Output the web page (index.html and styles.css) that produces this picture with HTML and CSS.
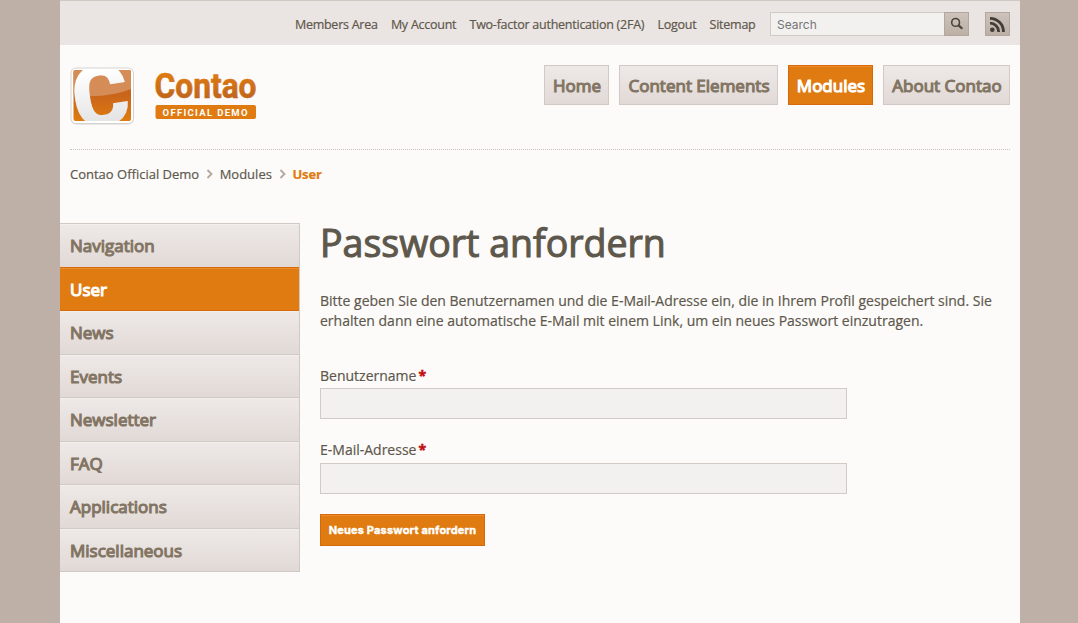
FILE: index.html
```html
<!DOCTYPE html>
<html lang="de">
<head>
<meta charset="utf-8">
<title>Passwort anfordern - Contao Official Demo</title>
<link rel="stylesheet" href="styles.css">
</head>
<body>
<div class="page">
  <div class="topbar">
    <nav class="meta-nav"><a>Members Area</a><a>My Account</a><a>Two-factor authentication (2FA)</a><a>Logout</a><a>Sitemap</a></nav>
    <form class="search">
      <input class="search-input" type="text" placeholder="Search">
      <button class="icon-button search-button" type="button" aria-label="Search">
        <svg width="14" height="14" viewBox="0 0 14 14" fill="none" stroke="#4b443c"><circle cx="5.6" cy="5.4" r="3.900" stroke-width="1.600"/><path d="M8.3 8.1l4 3.700" stroke-width="2.2"/></svg>
      </button>
    </form>
    <a class="icon-button rss-button" aria-label="RSS">
      <svg width="17" height="17" viewBox="0 0 17 17" fill="none" stroke="#433d37"><circle cx="3.300" cy="13.700" r="2.3" fill="#433d37" stroke="none"/><path d="M1 7.2a8.7 8.7 0 0 1 8.7 8.7M1 2.4a13.5 13.5 0 0 1 13.5 13.5" stroke-width="2.8"/></svg>
    </a>
  </div>
  <header class="header">
    <svg class="logo" width="190" height="62" viewBox="0 0 190 62" role="img" aria-label="Contao Official Demo">
      <defs>
        <linearGradient id="mark" x2="0" y2="1"><stop stop-color="#c9651a"/><stop offset=".5" stop-color="#c9651a"/><stop offset="1" stop-color="#df7b10"/></linearGradient>
        <linearGradient id="letter" gradientUnits="userSpaceOnUse" x1="0" y1="-56" x2="0" y2="0"><stop stop-color="#fff"/><stop offset="1" stop-color="#e2e2e2"/></linearGradient>
        <linearGradient id="word" gradientUnits="userSpaceOnUse" x1="0" y1="6" x2="0" y2="34"><stop stop-color="#e07c10"/><stop offset="1" stop-color="#bd641d"/></linearGradient>
        <clipPath id="tile"><rect x="3.500" y="4" width="57.500" height="51" rx="2"/></clipPath>
      </defs>
      <rect x="0.5" y="1.5" width="63.500" height="57" rx="6" fill="#d5d3d1"/>
      <rect x="1.5" y="2.5" width="61.500" height="54.500" rx="4.5" fill="#fff"/>
      <rect x="3.500" y="4" width="57.500" height="51" rx="2" fill="url(#mark)"/>
      <g clip-path="url(#tile)">
        <path d="M3 4h58v19Q36 33 3 29z" fill="#d58c56"/>
        <text class="logo-mark" transform="translate(7 64) rotate(-9)" x="0" y="0" font-size="86" textLength="57" lengthAdjust="spacingAndGlyphs">C</text>
      </g>
      <text class="logo-word" x="84.500" y="31.500" textLength="102" lengthAdjust="spacingAndGlyphs">Contao</text>
      <rect x="85.5" y="39" width="100.500" height="14" rx="2" fill="#df7b10"/>
      <text class="logo-tag" x="92.500" y="49.500" textLength="85">OFFICIAL DEMO</text>
    </svg>
    <nav class="main-nav"><a class="n-home">Home</a><a class="n-content">Content Elements</a><a class="n-modules active">Modules</a><a class="n-about">About Contao</a></nav>
  </header>
  <div class="breadcrumb">
    <a>Contao Official Demo</a>
    <svg width="8" height="10" viewBox="0 0 8 10"><path d="M1.500 1l4 4-4 4" fill="none" stroke="#b2a79c" stroke-width="1.800"/></svg>
    <a>Modules</a>
    <svg width="8" height="10" viewBox="0 0 8 10"><path d="M1.500 1l4 4-4 4" fill="none" stroke="#b2a79c" stroke-width="1.800"/></svg>
    <strong>User</strong>
  </div>
  <div class="columns">
    <nav class="side-nav"><a>Navigation</a><a class="active">User</a><a>News</a><a>Events</a><a>Newsletter</a><a>FAQ</a><a>Applications</a><a>Miscellaneous</a></nav>
    <main class="content">
      <h1>Passwort anfordern</h1>
      <p>Bitte geben Sie den Benutzernamen und die E-Mail-Adresse ein, die in Ihrem Profil gespeichert sind. Sie erhalten dann eine automatische E-Mail mit einem Link, um ein neues Passwort einzutragen.</p>
      <form class="form">
        <label for="username">Benutzername<span class="mandatory">*</span></label>
        <input id="username" type="text">
        <label class="email-label" for="email">E-Mail-Adresse<span class="mandatory">*</span></label>
        <input class="email-input" id="email" type="text">
        <button type="button">Neues Passwort anfordern</button>
      </form>
    </main>
  </div>
</div>
</body>
</html>
```
FILE: styles.css
```css
* { box-sizing: border-box; }
body {
  margin: 0;
  background: #beb0a7;
  color: #5e584c;
  font: 14px/20px "Open Sans", sans-serif;
  overflow: hidden;
}
.page { width: 960px; height: 623px; margin: 0 auto 0 60px; background: #fcfbfa; }
.topbar {
  height: 45px;
  display: flex;
  justify-content: flex-end;
  align-items: flex-start;
  padding: 11px 10px 0;
  background: #eae4e2;
  border-top: 1px solid #d1c8c1;
}
.meta-nav { display: flex; gap: 13.200px; margin-right: 14.500px; padding-top: 3px; font-size: 12.500px; letter-spacing: -0.250px; -webkit-text-stroke: 0.200px; }
.search { display: flex; margin-right: 16px; }
.search-input {
  width: 174px;
  height: 24px;
  padding: 1px 6px;
  border: 1px solid #d1cac5;
  border-right: 0;
  border-radius: 0;
  background: #f3f1f0;
  font: 12px Inter, sans-serif;
}
.search-input::placeholder { color: #757575; opacity: 1; }
.icon-button {
  width: 25px;
  height: 24px;
  padding: 0;
  display: flex;
  align-items: center;
  justify-content: center;
  border: 1px solid #b3a69b;
  background: linear-gradient(#cdc3bc, #bcb0a6);
}
.header {
  height: 105px;
  margin: 0 10px;
  display: flex;
  justify-content: space-between;
  align-items: flex-start;
  padding-top: 20px;
  border-bottom: 1px dotted #c9c3bd;
}
.logo { margin-top: 1px; overflow: visible; }
.logo-mark { font-family: Roboto, sans-serif; font-weight: 900; fill: url(#letter); }
.logo-word { font: 700 35px Roboto, sans-serif; fill: url(#word); stroke: url(#word); stroke-width: 0.600px; }
.logo-tag { font: 700 9.500px Roboto, sans-serif; fill: #fff; }
.main-nav { display: flex; gap: 10px; }
.main-nav a {
  height: 40px;
  padding-left: 1px;
  text-align: center;
  border: 1px solid #d1c9c4;
  background: linear-gradient(#eee9e7, #e1d9d6);
  color: #837564;
  -webkit-text-stroke: 1.100px;
  font-size: 17px;
  line-height: 40px;
}
.main-nav .n-home { width: 65px; }
.main-nav .n-content { width: 159px; }
.main-nav .n-modules { width: 85px; }
.main-nav .n-about { width: 127px; }
.main-nav .active {
  border-color: #d66a0a;
  background: #df7b10;
  box-shadow: inset 0 1px #ee8c2c;
  color: #fff;
}
.breadcrumb { height: 20px; margin: 14px 10px 39px; display: flex; align-items: center; font-size: 13px; -webkit-text-stroke: 0.200px; }
.breadcrumb svg { margin: 0 5.500px 0 7px; }
.breadcrumb strong { color: #df7b10; letter-spacing: -0.100px; }
.columns { display: flex; gap: 20px; }
.side-nav {
  width: 240px;
  height: 349px;
  display: flex;
  flex-direction: column;
  border: solid #d1c9c4;
  border-width: 0 1px 1px 0;
}
.side-nav a {
  flex: 1;
  min-height: 0;
  padding-left: 10px;
  border-top: 1px solid #d1c9c4;
  box-shadow: inset 0 1px #f3efed;
  background: linear-gradient(#eee9e7, #e1d9d6);
  color: #837564;
  -webkit-text-stroke: 1.100px;
  font-size: 17px;
  line-height: 43.500px;
}
.side-nav .active {
  border-top-color: #d66a0a;
  background: #df7b10;
  box-shadow: inset 0 1px #ee8c2c, 0 1px #d66a0a;
  z-index: 1;
  color: #fff;
}
.content { width: 690px; }
h1 { margin: 0; font-size: 37.500px; line-height: 39px; font-weight: 400; -webkit-text-stroke: 1.100px; }
p { margin: 29px 0 35px; -webkit-text-stroke: 0.200px; }
.form { display: flex; flex-direction: column; align-items: flex-start; }
.form label { height: 22px; -webkit-text-stroke: 0.200px; }
.form .email-label { height: 23px; }
.mandatory { color: #c10b0b; font-weight: 700; margin-left: 2px; -webkit-text-stroke: 0.500px; }
.form input {
  width: 527px;
  height: 31px;
  margin-bottom: 21px;
  border: 1px solid #d1cac5;
  border-radius: 0;
  background: #f3f1f0;
}
.form .email-input { margin-bottom: 20px; }
.form button {
  width: 165px;
  height: 32px;
  padding: 0;
  border: 1px solid #d66a0a;
  background: #df7b10;
  box-shadow: inset 0 1px #ee8c2c;
  color: #fff;
  font: 700 11px Inter, sans-serif;
  letter-spacing: 0.180px;
  -webkit-text-stroke: 0.400px;
}
```
